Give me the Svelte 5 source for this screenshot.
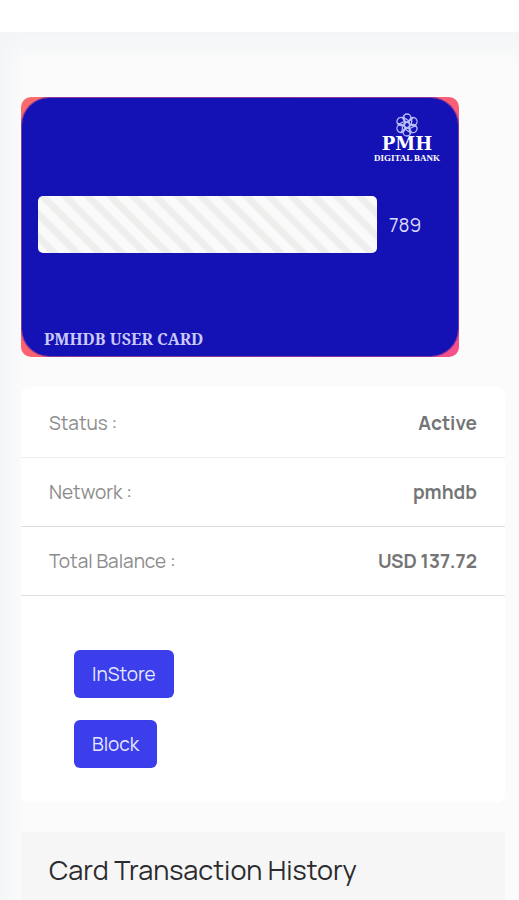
<script>
    const cardName = "PMHDB USER CARD";
    const cvv = "789";

    const details = [
        { label: "Status :", value: "Active", light: true },
        { label: "Network :", value: "pmhdb" },
        { label: "Total Balance :", value: "USD 137.72" }
    ];

    // Angles of the overlapping loops in the bank's emblem
    const petals = [0, 60, 120, 180, 240, 300];
</script>

<div class="topbar"></div>

<main>
    <section class="card-frame">
        <div class="bank-card">
            <div class="logo">
                <svg viewBox="0 0 24 24" aria-hidden="true">
                    <g fill="none" stroke="#b9bcf8" stroke-width="1.3">
                        {#each petals as angle}
                            <g transform="rotate({angle} 12 12)">
                                <circle cx="12" cy="5" r="4" />
                                <path d="M8 4 L14 8 L18 5 M12 9 L16 12" />
                            </g>
                        {/each}
                        <circle cx="12" cy="12" r="3" />
                    </g>
                </svg>
                <strong>PMH</strong>
                <span>DIGITAL BANK</span>
            </div>
            <div class="number-row">
                <div class="number"></div>
                <span>{cvv}</span>
            </div>
            <div class="card-name">{cardName}</div>
        </div>
    </section>

    <section class="panel">
        <dl>
            {#each details as item}
                <div class="row" class:light={item.light}>
                    <dt>{item.label}</dt>
                    <dd>{item.value}</dd>
                </div>
            {/each}
        </dl>
        <div class="actions">
            <button type="button">InStore</button>
            <button type="button">Block</button>
        </div>
    </section>

    <section class="history">
        <h2>Card Transaction History</h2>
    </section>
</main>

<style>
    :global(body) {
        background-color: #fbfbfb;
        font-family: Manrope, Inter, "Open Sans", sans-serif;
        overflow: hidden;
    }

    .topbar {
        height: 32px;
        background-color: #fff;
    }

    main {
        padding: 65px 14px 0 21px;
        min-height: 100vh;
        box-sizing: border-box;
        background:
            linear-gradient(to right, #f3f5f8, rgba(251, 251, 251, 0) 24px),
            linear-gradient(to bottom, #f3f5f7, rgba(251, 251, 251, 0) 32px),
            #fbfbfb;
    }

    .card-frame {
        max-width: 438px;
        border-radius: 10px;
        background: linear-gradient(135deg, #fb6a6c, #fb5f74 60%, #f4508c);
    }

    .bank-card {
        display: flex;
        flex-direction: column;
        height: 260px;
        padding: 15px 16px 8px;
        box-sizing: border-box;
        border: 1px solid rgba(21, 18, 181, 0.5);
        border-radius: 28px;
        background-color: #1512b5;
        background-clip: padding-box;
        color: #dcdcfc;
    }

    .logo {
        display: flex;
        flex-direction: column;
        align-items: center;
        align-self: flex-end;
        padding-right: 2px;
        font-family: "DejaVu Serif", serif;
        font-weight: bold;
        color: #fff;
    }

    .logo svg {
        width: 24px;
        height: 24px;
    }

    .logo strong {
        font-size: 18px;
        line-height: 14px;
    }

    .logo span {
        font-family: "Liberation Serif", serif;
        font-size: 9px;
        line-height: 14px;
    }

    .number-row {
        display: flex;
        align-items: center;
        gap: 12px;
        margin-top: 31px;
        font-size: 19px;
        line-height: 24px;
    }

    .number {
        flex: 1;
        max-width: 339px;
        height: 57px;
        border-radius: 5px;
        background: repeating-linear-gradient(45deg, #fafafa 0 7px, #eeeeed 9px 14px, #fafafa 16px);
    }

    .card-name {
        margin-top: auto;
        padding-left: 6px;
        font-family: "Noto Serif", "Liberation Serif", serif;
        font-size: 16px;
        font-weight: bold;
        line-height: 18px;
        color: #c9c9fb;
    }

    .panel {
        margin-top: 30px;
        padding-top: 2px;
        border-radius: 8px;
        background-color: #fff;
    }

    dl {
        margin: 0;
    }

    .row {
        display: flex;
        justify-content: space-between;
        padding: 22px 28px;
        border-bottom: 1px solid #dedede;
        font-size: 19px;
        line-height: 24px;
    }

    .row.light {
        border-bottom-color: #eee;
    }

    dt {
        color: #8c8c8c;
        font-weight: 400;
    }

    dd {
        margin: 0;
        color: #757575;
        font-weight: 700;
    }

    .actions {
        display: flex;
        flex-direction: column;
        align-items: flex-start;
        gap: 22px;
        padding: 54px 53px 34px;
    }

    button {
        padding: 12px 18px;
        border: none;
        border-radius: 6px;
        background-color: #3b3eea;
        color: #e6e8ff;
        font-family: inherit;
        font-size: 19px;
        line-height: 24px;
        cursor: pointer;
    }

    .history {
        margin-top: 30px;
        padding: 20px 28px;
        background-color: #f6f6f6;
    }

    h2 {
        margin: 0;
        font-size: 27px;
        font-weight: 400;
        line-height: 36px;
        color: #2b2b2f;
    }
</style>
